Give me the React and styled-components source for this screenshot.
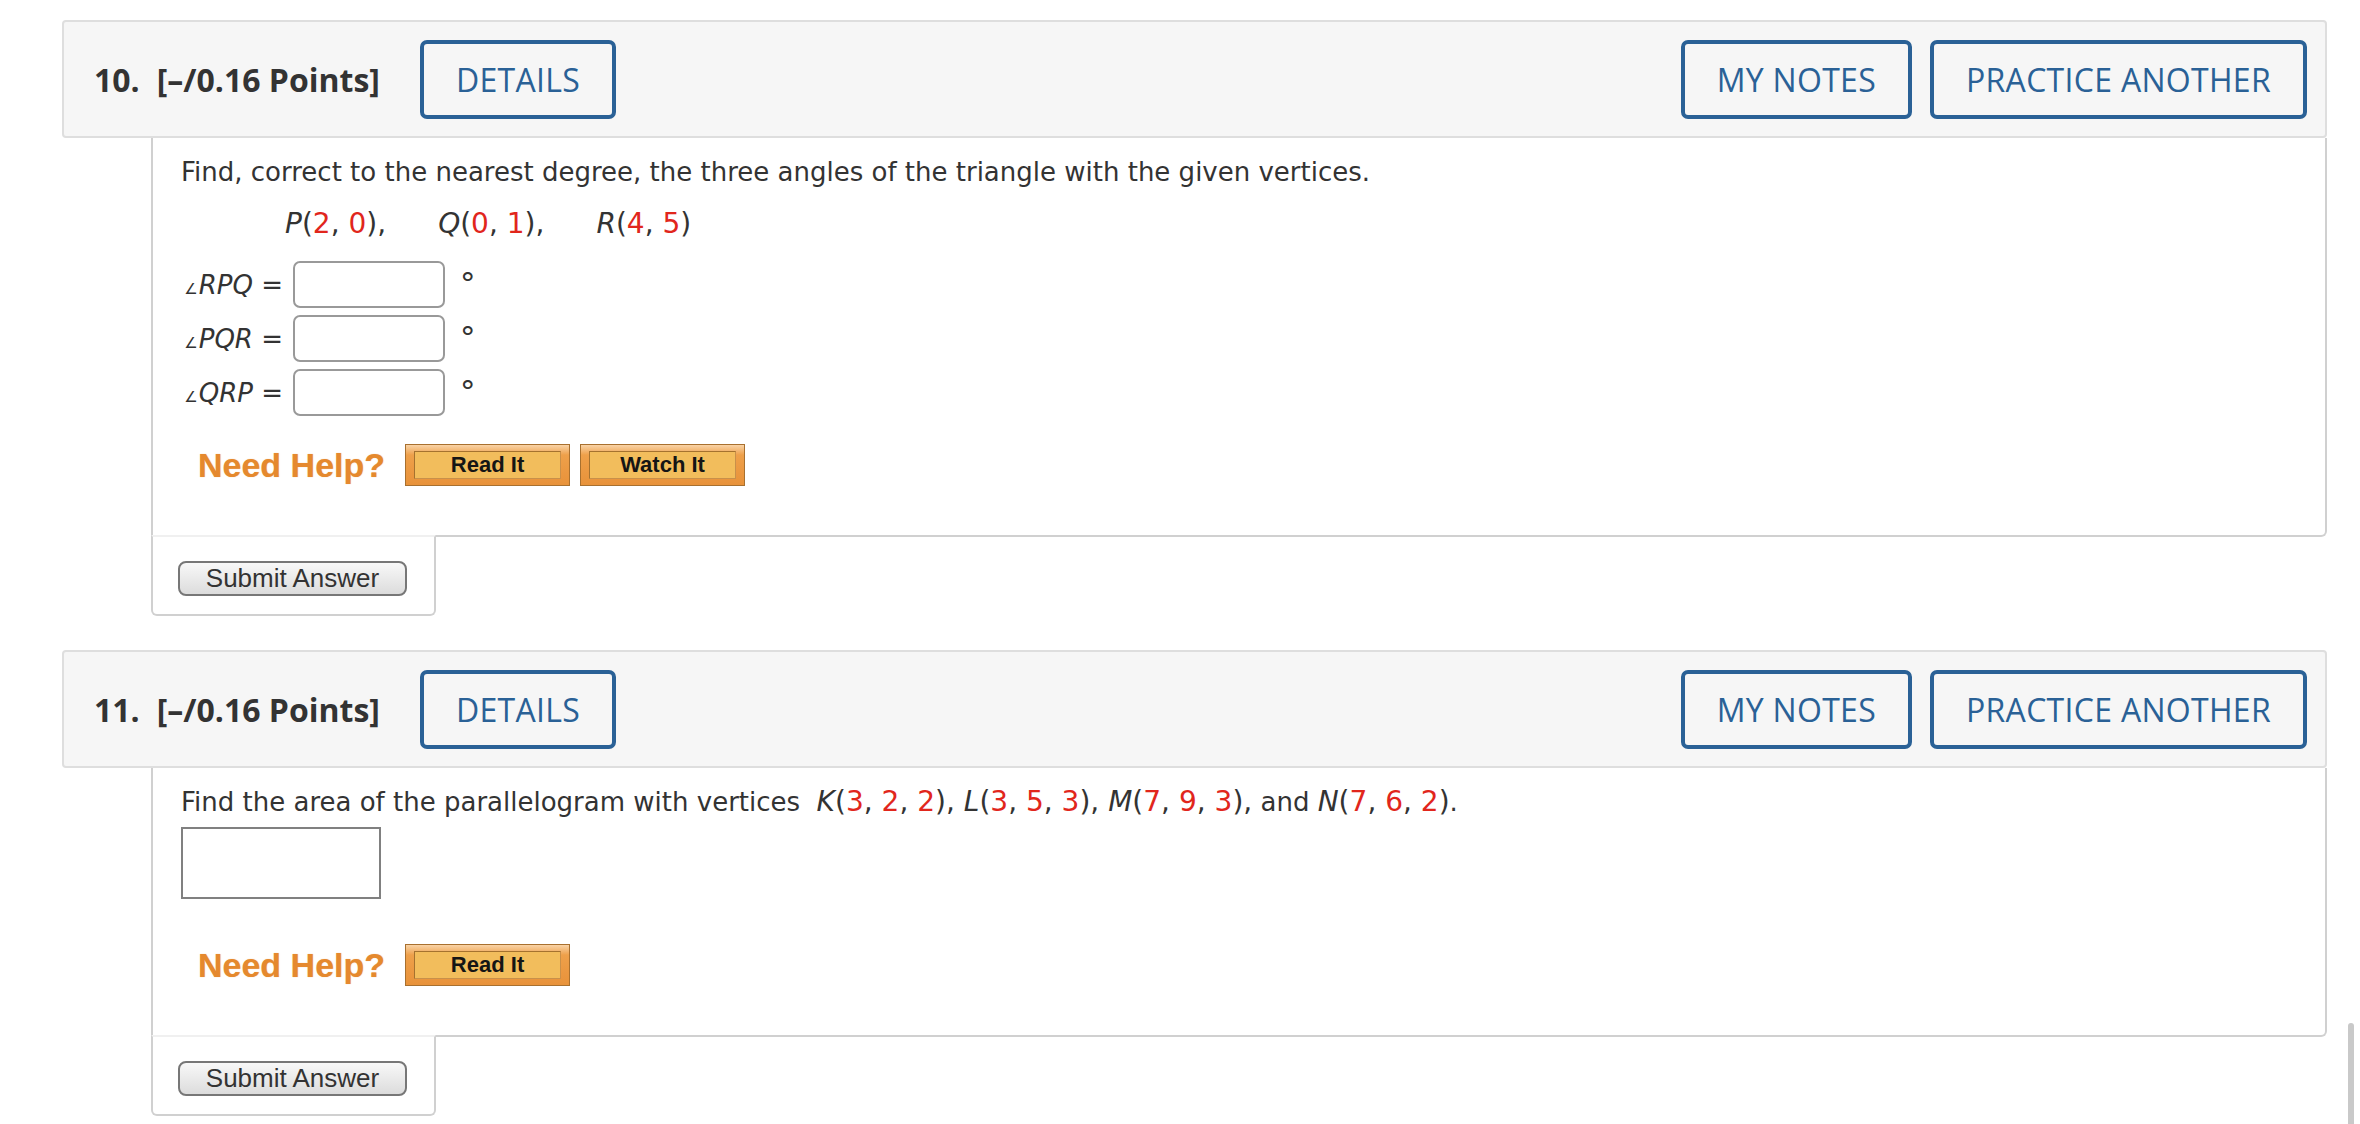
import React from 'react';
import styled, { createGlobalStyle } from 'styled-components';

const GlobalStyle = createGlobalStyle`
  body {
    margin: 0;
    background: #fff;
    font-family: "DejaVu Sans", Verdana, sans-serif;
    color: #333;
  }
`;

const Page = styled.div`
  padding: 20px 33px 40px 62px;
`;

const Question = styled.section`
  & + & {
    margin-top: 34px;
  }
`;

const Header = styled.div`
  display: flex;
  align-items: center;
  height: 118px;
  box-sizing: border-box;
  background: #f6f6f6;
  border: 2px solid #dedede;
  border-radius: 4px;
  padding: 0 18px 0 30px;
  font-family: "Open Sans", sans-serif;
`;

const Number = styled.span`
  font-size: 32px;
  font-weight: 700;
  color: #333;
`;

const Points = styled.span`
  font-size: 32px;
  font-weight: 700;
  color: #333;
  margin-left: 17px;
`;

const HeaderButton = styled.button`
  height: 79px;
  box-sizing: border-box;
  border: 4px solid #2a6196;
  border-radius: 7px;
  background: transparent;
  color: #2a6196;
  font-family: "Open Sans", sans-serif;
  font-size: 32px;
  font-weight: 500;
  letter-spacing: 0.3px;
  padding: 0 32px;
  margin-left: ${(p) => p.$gap || 0}px;
`;

const Spacer = styled.div`
  flex: 1;
`;

const Content = styled.div`
  margin-left: 89px;
  border: 2px solid #d0d0d0;
  border-top: none;
  border-radius: 0 0 6px 0;
  padding: 16px 28px 49px;
`;

const Prompt = styled.p`
  margin: 0;
  font-size: 26px;
  line-height: 36px;
  color: #333;
`;

const MathText = styled.span`
  font-size: 28px;
`;

const Var = styled.i`
  font-style: italic;
`;

const Num = styled.span`
  color: #e1261c;
`;

const MathLine = styled.div`
  display: flex;
  gap: 52px;
  margin-top: 16px;
  padding-left: 104px;
  font-size: 28px;
  line-height: 36px;
`;

const AngleGrid = styled.div`
  display: grid;
  grid-template-columns: 102px 152px auto;
  column-gap: 10px;
  row-gap: 7px;
  margin-top: 19px;
  align-items: center;
`;

const AngleLabel = styled.span`
  font-size: 26px;
  text-align: right;
  white-space: nowrap;
`;

const AngleMark = styled.span`
  font-size: 15px;
  margin-right: 1px;
`;

const AngleInput = styled.input`
  width: 152px;
  height: 47px;
  box-sizing: border-box;
  border: 2px solid #999;
  border-radius: 7px;
  background: #fff;
`;

const Degree = styled.span`
  align-self: start;
  margin: 7px 0 0 5px;
  font-size: 31px;
  line-height: 31px;
`;

const AnswerBox = styled.input`
  display: block;
  width: 200px;
  height: 72px;
  box-sizing: border-box;
  border: 2px solid #808080;
  margin-top: 7px;
  background: #fff;
`;

const HelpRow = styled.div`
  display: flex;
  align-items: center;
  margin-top: ${(p) => p.$top}px;
  padding-left: 17px;
`;

const NeedHelp = styled.span`
  font-family: "Liberation Sans", Arial, sans-serif;
  font-weight: 700;
  font-size: 34px;
  color: #e5892e;
  text-shadow: 0 0 1px rgba(229, 137, 46, 0.6);
  margin-right: 20px;
`;

const HelpButton = styled.button`
  width: 165px;
  height: 42px;
  box-sizing: border-box;
  padding: 6px 8px;
  border: 1px solid #a8702f;
  background: linear-gradient(#f9d3a6 0%, #eea04a 25%, #e8923a 100%);
  margin-right: 10px;
  cursor: pointer;
`;

const HelpInner = styled.span`
  display: flex;
  align-items: center;
  justify-content: center;
  height: 100%;
  box-sizing: border-box;
  border: 1px solid #a5722f;
  border-bottom-color: #c9904a;
  border-right-color: #c9904a;
  background: #f2bd5c;
  font-family: "Liberation Sans", Arial, sans-serif;
  font-weight: 700;
  font-size: 22px;
  color: #151515;
`;

const SubmitTab = styled.div`
  margin-left: 89px;
  margin-top: -2px;
  width: 285px;
  height: 81px;
  box-sizing: border-box;
  border: 2px solid #d0d0d0;
  border-top-color: #f0f0f0;
  border-radius: 0 0 6px 6px;
  background: #fff;
  padding: 24px 0 0 25px;
`;

const SubmitButton = styled.button`
  width: 229px;
  height: 35px;
  box-sizing: border-box;
  border: 2px solid #777;
  border-radius: 8px;
  background: linear-gradient(#f8f8f8, #dcdcdc);
  font-family: "Liberation Sans", Arial, sans-serif;
  font-size: 26px;
  line-height: 31px;
  color: #333;
  padding: 0;
`;

const ScrollThumb = styled.div`
  position: fixed;
  right: 6px;
  bottom: 0;
  width: 6px;
  height: 101px;
  border-radius: 3px 3px 0 0;
  background: #c9c9c9;
`;

function QuestionHeader({ number }) {
  return (
    <Header>
      <Number>{number}.</Number>
      <Points>[–/0.16 Points]</Points>
      <HeaderButton $gap={40}>DETAILS</HeaderButton>
      <Spacer />
      <HeaderButton>MY NOTES</HeaderButton>
      <HeaderButton $gap={18}>PRACTICE ANOTHER</HeaderButton>
    </Header>
  );
}

function Help({ top, watch }) {
  return (
    <HelpRow $top={top}>
      <NeedHelp>Need Help?</NeedHelp>
      <HelpButton><HelpInner>Read It</HelpInner></HelpButton>
      {watch && <HelpButton><HelpInner>Watch It</HelpInner></HelpButton>}
    </HelpRow>
  );
}

function Submit() {
  return (
    <SubmitTab>
      <SubmitButton>Submit Answer</SubmitButton>
    </SubmitTab>
  );
}

const angles = ['RPQ', 'PQR', 'QRP'];

export default function App() {
  return (
    <Page>
      <GlobalStyle />
      <Question>
        <QuestionHeader number={10} />
        <Content>
          <Prompt>Find, correct to the nearest degree, the three angles of the triangle with the given vertices.</Prompt>
          <MathLine>
            <span><Var>P</Var>(<Num>2</Num>, <Num>0</Num>),</span>
            <span><Var>Q</Var>(<Num>0</Num>, <Num>1</Num>),</span>
            <span><Var>R</Var>(<Num>4</Num>, <Num>5</Num>)</span>
          </MathLine>
          <AngleGrid>
            {angles.map((a) => (
              <React.Fragment key={a}>
                <AngleLabel><AngleMark>∠</AngleMark><Var>{a}</Var> =</AngleLabel>
                <AngleInput type="text" />
                <Degree>°</Degree>
              </React.Fragment>
            ))}
          </AngleGrid>
          <Help top={28} watch />
        </Content>
        <Submit />
      </Question>
      <Question>
        <QuestionHeader number={11} />
        <Content>
          <Prompt>
            Find the area of the parallelogram with vertices&nbsp;{' '}
            <MathText><Var>K</Var>(<Num>3</Num>, <Num>2</Num>, <Num>2</Num>), <Var>L</Var>(<Num>3</Num>, <Num>5</Num>, <Num>3</Num>), <Var>M</Var>(<Num>7</Num>, <Num>9</Num>, <Num>3</Num>),</MathText> and <MathText><Var>N</Var>(<Num>7</Num>, <Num>6</Num>, <Num>2</Num>)</MathText>.
          </Prompt>
          <AnswerBox type="text" />
          <Help top={45} />
        </Content>
        <Submit />
      </Question>
      <ScrollThumb />
    </Page>
  );
}
